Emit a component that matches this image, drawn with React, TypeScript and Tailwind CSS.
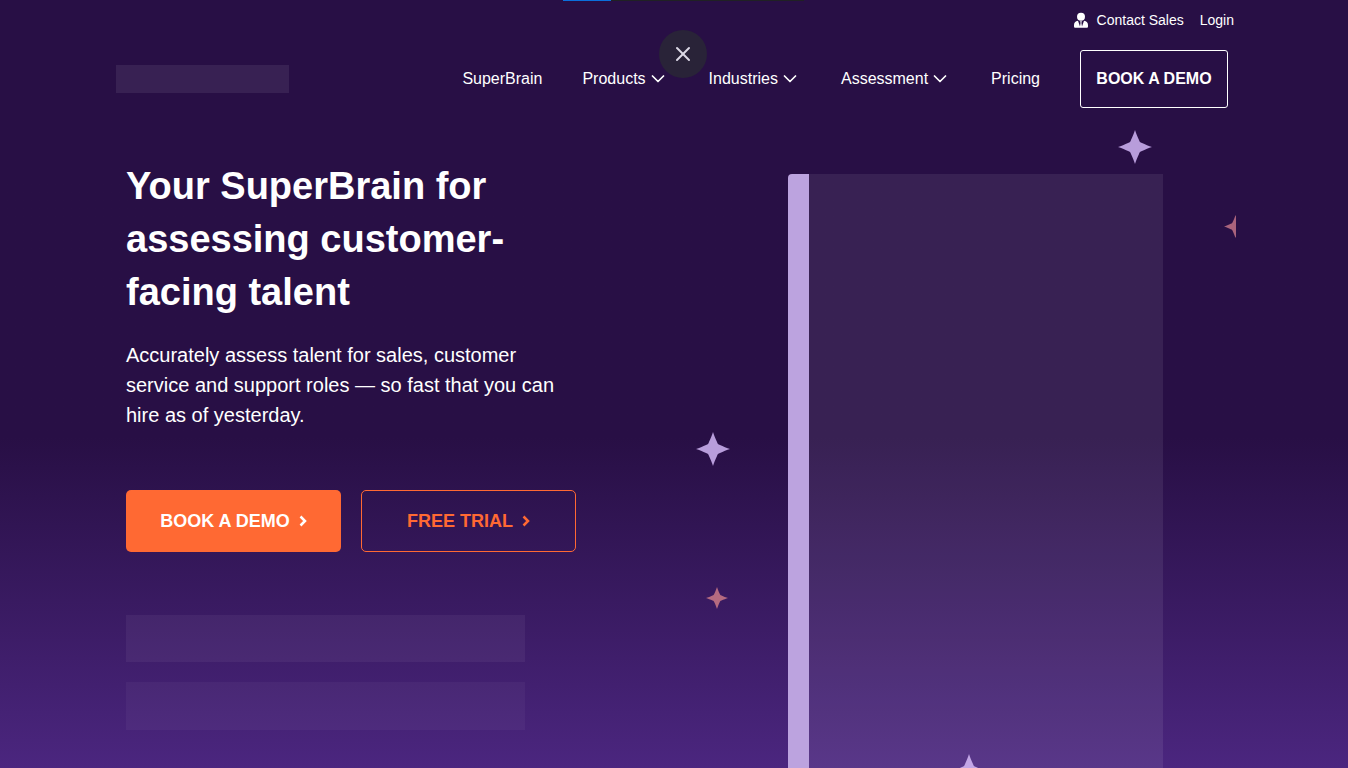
import { X } from "lucide-react";

const STARS = [
  { tone: "text-[#b89ddb]", place: "left-[444px] top-[22px] size-[34px]" },
  { tone: "text-[#a9637c]", place: "left-[550px] top-[107px] size-[23px]" },
  { tone: "text-[#b89ddb]", place: "left-[22px] top-[324px] size-[34px]" },
  { tone: "text-[#b56b80]", place: "left-[32px] top-[479px] size-[22px]" },
  { tone: "text-[#c3a6e6]", place: "left-[278px] top-[646px] size-[34px]" },
];

const NAV = [
  { label: "SuperBrain", menu: false },
  { label: "Products", menu: true },
  { label: "Industries", menu: true },
  { label: "Assessment", menu: true },
  { label: "Pricing", menu: false },
];

function Star({ className }: { className: string }) {
  return (
    <svg viewBox="0 0 34 34" fill="currentColor" aria-hidden="true" className={className}>
      <path d="M17 0C18 3 19.500 7 21 10C21.700 12 22 12.300 24 13C27 14.500 31 16 34 17C31 18 27 19.500 24 21C22 21.700 21.700 22 21 24C19.500 27 18 31 17 34C16 31 14.500 27 13 24C12.300 22 12 21.700 10 21C7 19.500 3 18 0 17C3 16 7 14.500 10 13C12 12.300 12.300 12 13 10C14.500 7 16 3 17 0Z" />
    </svg>
  );
}

function MenuArrow() {
  return (
    <svg viewBox="0 0 14 8" fill="none" stroke="currentColor" strokeWidth="1.700" aria-hidden="true" className="mr-1 ml-[5px] h-2 w-[14px]">
      <path d="M1.500 1L7 6.500L12.500 1" strokeLinecap="round" strokeLinejoin="round" />
    </svg>
  );
}

function ButtonArrow() {
  return (
    <svg viewBox="0 0 8 12" fill="none" stroke="currentColor" strokeWidth="2.500" aria-hidden="true" className="h-3 w-2">
      <path d="M1.500 1.500L6 6L1.500 10.500" />
    </svg>
  );
}

function PersonIcon() {
  return (
    <svg viewBox="0 0 14 16" fill="currentColor" aria-hidden="true" className="h-4 w-[14px]">
      <circle cx="7" cy="4.800" r="4" />
      <path d="M4 8.800L6 14.500L6.600 10.800L6 9.300H8L7.400 10.800L8 14.500L10 8.800C12.800 9.300 14 10.800 14 13.200V14.200C14 15.200 13.500 15.800 12.500 15.800H1.500C0.500 15.800 0 15.200 0 14.200V13.200C0 10.800 1.200 9.300 4 8.800Z" />
    </svg>
  );
}

function Header() {
  return (
    <header className="px-[114px]">
      <div className="flex h-[50px] items-start justify-end gap-4 pt-[10px] text-sm leading-5">
        <a href="#contact" className="flex items-center gap-[9px]">
          <PersonIcon />
          Contact Sales
        </a>
        <a href="#login">Login</a>
      </div>
      <div className="flex items-center justify-between pr-[6px] pl-[2px]">
        <a href="#home" aria-label="Home" className="h-7 w-[173px] bg-white/8" />
        <nav className="flex items-center gap-10">
          {NAV.map((item) =>
            item.menu ? (
              <button key={item.label} type="button" className="flex items-center">
                {item.label}
                <MenuArrow />
              </button>
            ) : (
              <a key={item.label} href="#page">
                {item.label}
              </a>
            ),
          )}
          <a
            href="#demo"
            className="flex h-[58px] w-[148px] items-center justify-center rounded-[3px] border border-white font-bold"
          >
            BOOK A DEMO
          </a>
        </nav>
      </div>
    </header>
  );
}

function HeroText() {
  return (
    <div className="pt-[52px] pl-[14px]">
      <div className="max-w-[450px]">
        <h1 className="text-[38px] leading-[53px] font-bold">
          Your SuperBrain for assessing customer-facing talent
        </h1>
        <p className="mt-[21px] text-xl leading-[30px]">
          Accurately assess talent for sales, customer service and support roles — so fast that you can hire as of
          yesterday.
        </p>
        <div className="mt-[60px] grid grid-cols-2 gap-5 text-lg font-bold">
          <a href="#demo" className="flex h-[62px] items-center justify-center gap-[9px] rounded-[5px] bg-[#ff6933]">
            BOOK A DEMO
            <ButtonArrow />
          </a>
          <a
            href="#trial"
            className="flex h-[62px] items-center justify-center gap-[9px] rounded-[5px] border border-[#ff6933] text-[#ff6933]"
          >
            FREE TRIAL
            <ButtonArrow />
          </a>
        </div>
      </div>
      <div className="mt-[63px] flex max-w-[399px] flex-col gap-5">
        <div className="h-[47px] bg-white/5" />
        <div className="h-12 bg-white/4" />
      </div>
    </div>
  );
}

function HeroArt() {
  return (
    <div className="relative flex overflow-hidden pt-[66px] pl-[114px]">
      <div className="flex w-[375px]">
        <div className="w-[21px] rounded-tl-[4px] bg-[#bca3df]" />
        <div className="flex-1 bg-white/8" />
      </div>
      {STARS.map((star) => (
        <Star key={star.place} className={`absolute ${star.tone} ${star.place}`} />
      ))}
    </div>
  );
}

export default function App() {
  return (
    <div className="relative flex min-h-screen flex-col overflow-hidden bg-linear-to-b from-[#280f45] from-57% to-[#4b267f] font-['Liberation_Sans',Arial,sans-serif] text-base text-white">
      <div className="absolute top-0 left-[563px] flex h-px w-[241px] bg-[#202124]">
        <div className="w-12 bg-[#0b6fdc]" />
      </div>
      <Header />
      <main className="grid flex-1 grid-cols-2 px-[112px]">
        <HeroText />
        <HeroArt />
      </main>
      <button
        type="button"
        aria-label="Close"
        className="absolute top-[30px] left-[659px] flex size-12 items-center justify-center rounded-full bg-[#292338] text-[#dcd8e6]"
      >
        <X size={24} strokeWidth={2} />
      </button>
    </div>
  );
}
